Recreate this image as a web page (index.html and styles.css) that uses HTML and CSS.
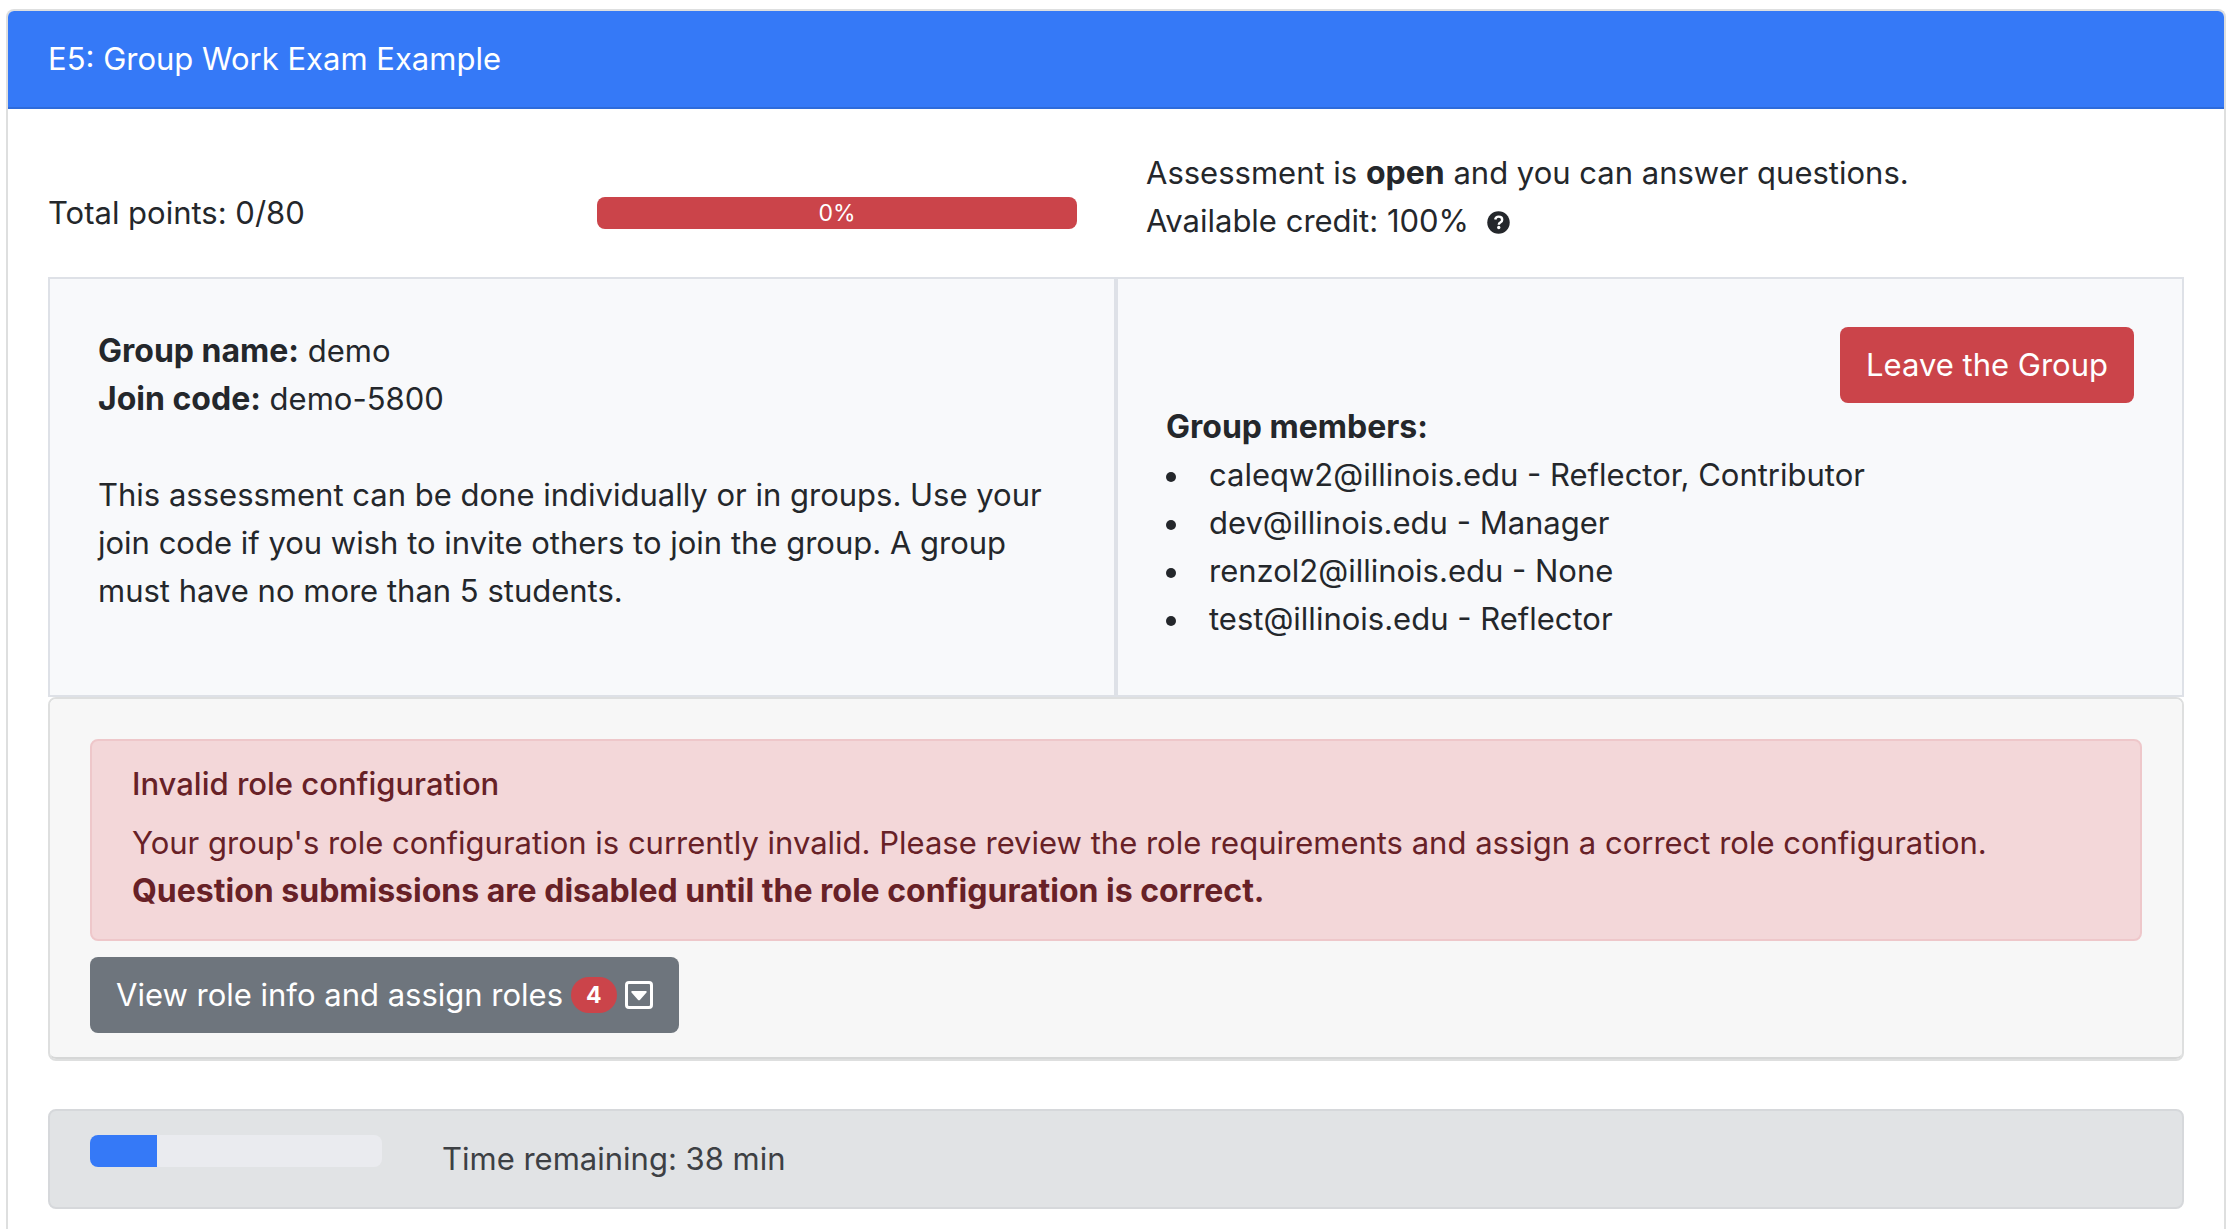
FILE: index.html
```html
<!DOCTYPE html>
<html lang="en">
<head>
  <meta charset="utf-8">
  <meta name="viewport" content="width=device-width, initial-scale=1">
  <title>E5: Group Work Exam Example</title>
  <link rel="stylesheet" href="styles.css">
</head>
<body>
  <main class="card">
    <h1 class="card-header">E5: Group Work Exam Example</h1>
    <div class="card-body">
      <section class="summary">
        <div>Total points: 0/80</div>
        <div class="score-bar" role="progressbar" aria-label="Score" aria-valuenow="0" aria-valuemin="0" aria-valuemax="100">0%</div>
        <div class="status">
          <div>Assessment is <strong>open</strong> and you can answer questions.</div>
          <div class="credit">Available credit: 100%
            <button type="button" class="help" aria-label="Credit details">
              <svg viewBox="0 0 512 512" width="23" height="23" aria-hidden="true">
                <circle cx="256" cy="256" r="250" fill="currentColor"/>
                <path d="M182 190c8-42 36-64 78-64 45 0 78 26 78 66 0 32-17 49-42 64-23 14-32 22-32 43v8" fill="none" stroke="#fff" stroke-width="54"/>
                <circle cx="262" cy="368" r="37" fill="#fff"/>
              </svg>
            </button>
          </div>
        </div>
      </section>

      <section class="group">
        <div class="group-cell">
          <div><strong>Group name:</strong> demo</div>
          <div><strong>Join code:</strong> demo-5800</div>
          <p class="group-note">This assessment can be done individually or in groups. Use your join code if you wish to invite others to join the group. A group must have no more than 5 students.</p>
        </div>
        <div class="group-cell">
          <div class="group-actions"><button type="button" class="btn btn-danger">Leave the Group</button></div>
          <strong>Group members:</strong>
          <ul class="members">
            <li>caleqw2@illinois.edu - Reflector, Contributor</li>
            <li>dev@illinois.edu - Manager</li>
            <li>renzol2@illinois.edu - None</li>
            <li>test@illinois.edu - Reflector</li>
          </ul>
        </div>
      </section>

      <section class="roles">
        <div class="roles-inner">
          <div class="alert" role="alert">
            <h2 class="alert-title">Invalid role configuration</h2>
            <div>Your group's role configuration is currently invalid. Please review the role requirements and assign a correct role configuration.</div>
            <strong>Question submissions are disabled until the role configuration is correct.</strong>
          </div>
          <button type="button" class="btn btn-secondary">
            <span>View role info and assign roles</span>
            <span class="badge">4</span>
            <svg viewBox="0 0 28 28" width="28" height="28" aria-hidden="true">
              <rect x="1.5" y="1.5" width="25" height="25" rx="2.5" fill="none" stroke="currentColor" stroke-width="3"/>
              <path d="M7.2 10h13.6c.9 0 1.3 1 .7 1.6l-6.4 7.2c-.6.7-1.6.7-2.2 0l-6.4-7.2c-.6-.6-.2-1.6.7-1.6z" fill="currentColor"/>
            </svg>
          </button>
        </div>
      </section>

      <section class="timer">
        <div class="timer-track" role="progressbar" aria-label="Time used" aria-valuenow="23" aria-valuemin="0" aria-valuemax="100">
          <div class="timer-fill" style="width: 23%"></div>
        </div>
        <div>Time remaining: 38 min</div>
      </section>
    </div>
  </main>
</body>
</html>
```

FILE: styles.css
```css
*,
*::before {
  box-sizing: border-box;
}

body {
  display: flex;
  min-height: 100vh;
  margin: 0;
  padding: 9px 4px 0 6px;
  background: #fff;
  color: #24272b;
  font-family: Inter, "Liberation Sans", sans-serif;
  font-size: 31px;
  line-height: 48px;
}

strong {
  font-size: 32px;
  font-weight: 700;
  line-height: 1;
}

button {
  font: inherit;
  cursor: pointer;
}

.card {
  flex: 1;
  min-width: 0;
  border: 2px solid #dedfdf;
  border-bottom: 0;
  border-radius: 8px 8px 0 0;
}

.card-header {
  margin: 0;
  padding: 24px 40px;
  border-bottom: 2px solid #2e6bda;
  border-radius: 6px 6px 0 0;
  background: #3579f7;
  color: #fff;
  font-size: inherit;
  font-weight: 400;
}

.card-body {
  padding: 40px 40px 20px;
}

.summary {
  display: grid;
  grid-template-columns: 480fr 480fr 1038fr;
  gap: 69px;
  align-items: center;
}

.score-bar {
  height: 32px;
  border-radius: 8px;
  background: #cb444a;
  color: #fff;
  font-size: 23px;
  line-height: 32px;
  text-align: center;
}

.status {
  padding-bottom: 32px;
}

.credit {
  display: flex;
  align-items: center;
  gap: 18px;
}

.help {
  display: flex;
  padding: 2px 0 0;
  border: 0;
  background: none;
  color: inherit;
}

.group {
  display: grid;
  grid-template-columns: 1fr 1fr;
}

.group-cell {
  padding: 48px 48px 52px;
  border: 2px solid #dee1e7;
  background: #f8f9fb;
}

.group-note {
  margin: 48px 0 0;
}

.group-actions {
  display: flex;
  justify-content: flex-end;
}

.btn {
  display: flex;
  align-items: center;
  gap: 8px;
  padding: 14px 26px;
  border: 0;
  border-radius: 8px;
  color: #fff;
}

.btn-danger {
  background: #cb444a;
}

.btn-secondary {
  background: #6e757d;
}

.members {
  margin: 0;
  padding: 0;
  list-style: none;
}

.members li {
  display: flex;
  align-items: center;
  gap: 33px;
}

.members li::before {
  content: "";
  width: 10px;
  height: 10px;
  margin-top: 4px;
  border-radius: 50%;
  background: currentColor;
}

.roles {
  border: 2px solid #dedfdf;
  border-radius: 8px;
}

.roles-inner {
  padding: 40px 40px 24px;
  border-bottom: 2px solid #d6d7d7;
  border-radius: 6px;
  background: #f7f7f7;
}

.alert {
  margin-bottom: 16px;
  padding: 24px 40px;
  border: 2px solid #eec7ca;
  border-radius: 8px;
  background: #f3d7d9;
  color: #672127;
}

.alert-title {
  margin: 0 0 16px;
  font-size: inherit;
  font-weight: 500;
  line-height: 38px;
}

.badge {
  padding: 0 15px;
  border-radius: 18px;
  background: #cb444a;
  font-size: 23px;
  font-weight: 700;
  line-height: 36px;
}

.timer {
  display: grid;
  grid-template-columns: 292fr 1700fr;
  gap: 60px;
  align-items: start;
  margin-top: 48px;
  padding: 24px 40px;
  border: 2px solid #d6d8db;
  border-radius: 8px;
  background: #e1e3e5;
  color: #3d4044;
}

.timer-track {
  height: 32px;
  overflow: hidden;
  border-radius: 8px;
  background: #eaebef;
}

.timer-fill {
  height: 100%;
  background: #3579f7;
}
```
